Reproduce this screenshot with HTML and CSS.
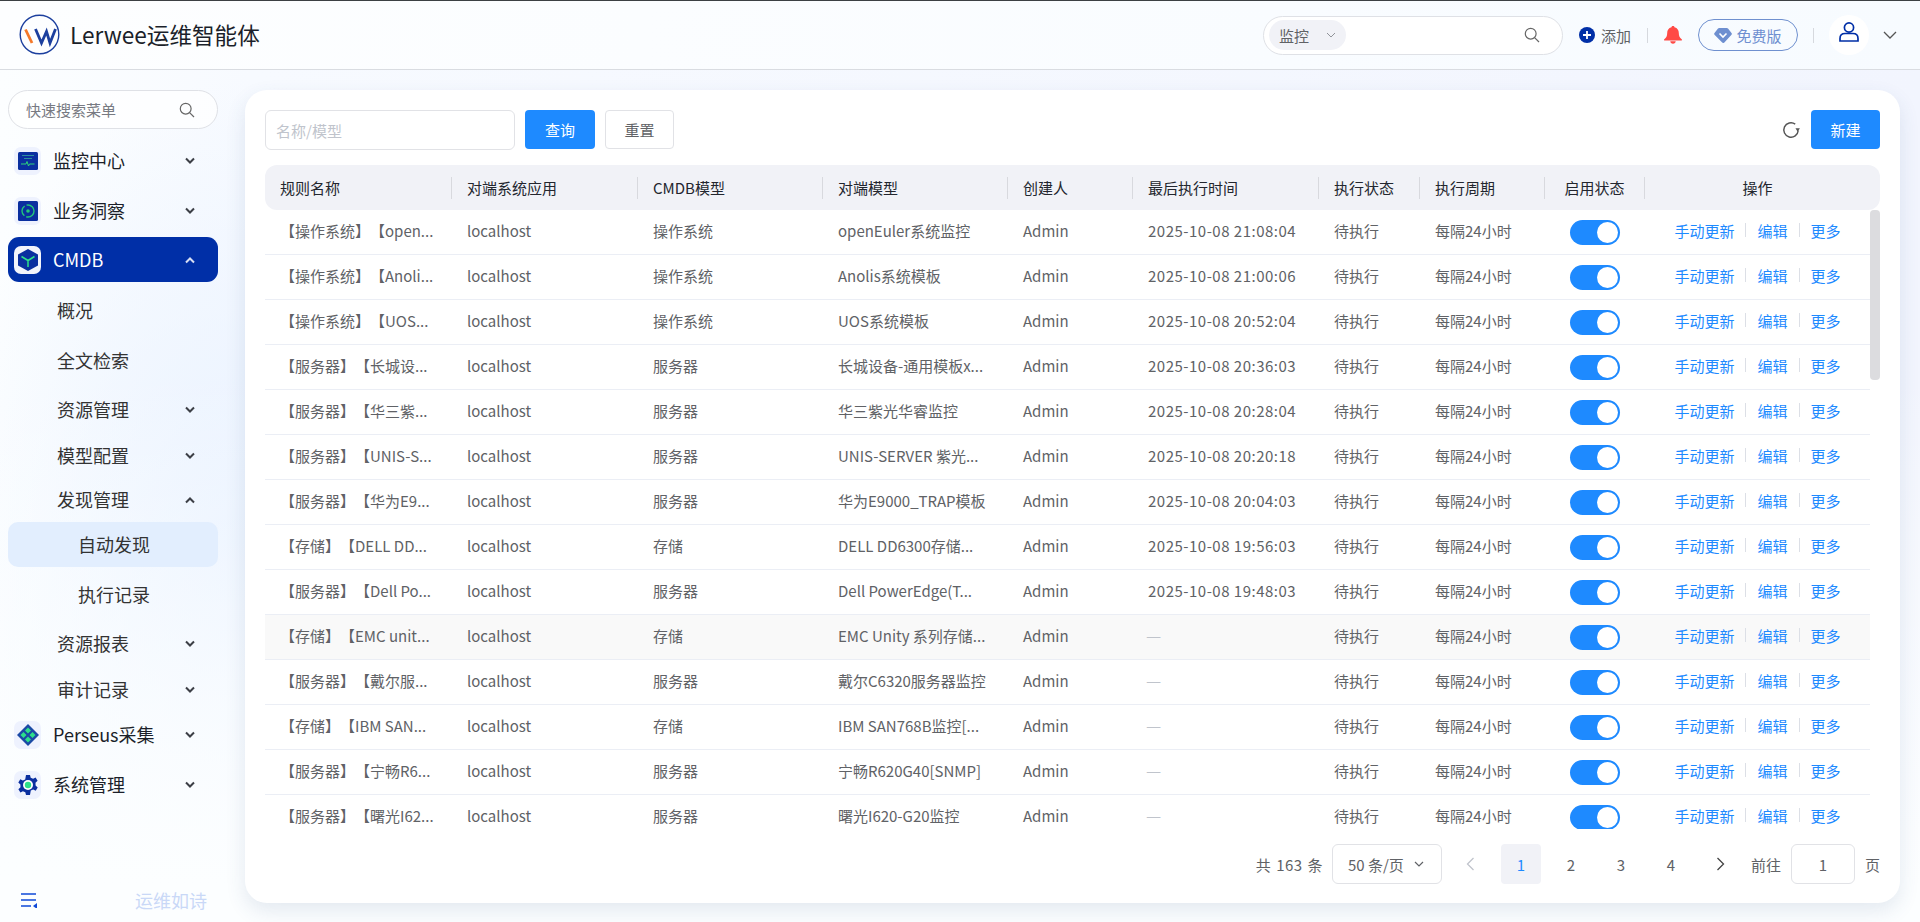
FILE: index.html
```html
<!DOCTYPE html>
<html lang="zh-CN">
<head>
<meta charset="utf-8">
<title>Lerwee运维智能体</title>
<link rel="stylesheet" href="styles.css">
</head>
<body>
<div class="app">
  <header class="topbar">
    <svg class="logo" viewBox="0 0 42 42" width="42" height="42" fill="none">
      <circle cx="20.5" cy="20.500" r="19.300" stroke="#1c3f9e" stroke-width="1.400"/>
      <path d="M6.500 15.500 13 29" stroke="#f4792b" stroke-width="2.800"/>
      <path d="M16.500 15 22.500 29 27.500 17.500 31 29 36.500 15" stroke="#1c3f9e" stroke-width="2.800"/>
    </svg>
    <div class="brand">Lerwee运维智能体</div>
    <div class="topsearch">
      <div class="scope">监控
        <svg width="10" height="6" viewBox="0 0 10 6" fill="none"><path d="M1 1l4 4 4-4" stroke="#909399" stroke-width="1"/></svg>
      </div>
      <svg class="search-ico" width="16" height="16" viewBox="0 0 16 16" fill="none"><circle cx="6.700" cy="6.700" r="5.400" stroke="#666" stroke-width="1.200"/><path d="M10.600 10.600 15 15" stroke="#666" stroke-width="1.200"/></svg>
    </div>
    <svg class="addico" width="16" height="16" viewBox="0 0 16 16"><circle cx="8" cy="8" r="8" fill="#002fa7"/><path d="M8 4v8M4 8h8" stroke="#fff" stroke-width="1.800"/></svg>
    <span class="addtxt">添加</span>
    <span class="vline vline-a"></span>
    <svg class="bell" width="20" height="18" viewBox="0 0 20 18"><path d="M10 0c.9 0 1.400.5 1.500 1.200C14.500 2 15.800 4.200 15.800 7c0 3 .9 4.800 2.900 6.200.5.400.3 1.300-.4 1.300H1.700c-.7 0-.9-.9-.4-1.300C3.300 11.800 4.200 10 4.200 7c0-2.800 1.300-5 4.300-5.800C8.600.5 9.100 0 10 0z" fill="#ff4a46"/><path d="M7.300 15.300h5.400c0 1.500-1.200 2.500-2.700 2.500s-2.700-1-2.700-2.500z" fill="#ff4a46"/></svg>
    <div class="plan">
      <svg width="18" height="15" viewBox="0 0 18 15"><path d="M5.200 0h7.600c.5 0 .9.2 1.200.6l3.500 4.300c.5.600.5 1.300 0 1.900l-7.100 7.700c-.7.700-1.500.7-2.200 0L.5 6.800c-.5-.6-.5-1.300 0-1.900L4 .6C4.300.2 4.700 0 5.200 0z" fill="#6e8fd0"/><path d="M5.500 5.500 9 9l3.500-3.500" fill="none" stroke="#fff" stroke-width="1.600"/></svg>
      <span>免费版</span>
    </div>
    <span class="vline vline-b"></span>
    <div class="avatar">
      <svg width="20" height="20" viewBox="0 0 20 20" fill="none"><circle cx="10" cy="5.500" r="4.600" stroke="#002fa7" stroke-width="1.700"/><path d="M1 19v-2.500c0-3 2-5 5-5h8c3 0 5 2 5 5V19z" stroke="#002fa7" stroke-width="1.700"/></svg>
    </div>
    <svg class="userchev" width="14" height="8" viewBox="0 0 14 8" fill="none"><path d="M1 1l6 6 6-6" stroke="#555" stroke-width="1.300"/></svg>
  </header>

  <div class="main">
    <aside class="sidebar">
      <div class="menusearch">
        <span>快速搜索菜单</span>
        <svg width="16" height="16" viewBox="0 0 16 16" fill="none"><circle cx="6.700" cy="6.700" r="5.400" stroke="#666" stroke-width="1.200"/><path d="M10.600 10.600 15 15" stroke="#666" stroke-width="1.200"/></svg>
      </div>
      <nav class="menu">
        <div class="item top m-9">
          <span class="tile"><svg width="20" height="18" viewBox="0 0 20 18"><rect width="20" height="18" rx="1.500" fill="#0a2f9f"/><path d="M4 3.500h12" stroke="#2d8f9d" stroke-width="1"/><path d="M6 6.500h8" stroke="#2d8f9d" stroke-width="1"/><path d="M3 12h5l1-2.500 1.500 4.500 1-2h5" fill="none" stroke="#2ed47a" stroke-width="1"/></svg></span>
          <span class="label">监控中心</span><svg class="chev" viewBox="0 0 12 8" width="12" height="8" fill="none"><path d="M2 1.500 6 5.500l4-4" stroke="#3c3f46" stroke-width="2"/></svg>
        </div>
        <div class="item top m-5">
          <span class="tile"><svg width="20" height="20" viewBox="0 0 20 20"><rect width="20" height="20" rx="1.500" fill="#0a2f9f"/><circle cx="10" cy="10" r="6" fill="none" stroke="#22c77a" stroke-width="1.400" stroke-dasharray="11 2"/><circle cx="10" cy="10" r="1.800" fill="#22c77a"/></svg></span>
          <span class="label">业务洞察</span><svg class="chev" viewBox="0 0 12 8" width="12" height="8" fill="none"><path d="M2 1.500 6 5.500l4-4" stroke="#3c3f46" stroke-width="2"/></svg>
        </div>
        <div class="item top active m-4">
          <span class="tile tile-white"><svg width="22" height="24" viewBox="0 0 22 24"><path d="M11 1l10 5.500v11L11 23 1 17.500v-11z" fill="#0a2f9f"/><path d="M4.500 8.500 11 12.500l6.500-4M11 12.500V19" fill="none" stroke="#2de08a" stroke-width="1.500"/></svg></span>
          <span class="label">CMDB</span><svg class="chev" viewBox="0 0 12 8" width="12" height="8" fill="none"><path d="M2 6.500 6 2.500l4 4" stroke="#d7def2" stroke-width="2"/></svg>
        </div>
        <div class="item sub m-6"><span class="label">概况</span></div>
        <div class="item sub m-5"><span class="label">全文检索</span></div>
        <div class="item sub m-4"><span class="label">资源管理</span><svg class="chev" viewBox="0 0 12 8" width="12" height="8" fill="none"><path d="M2 1.500 6 5.500l4-4" stroke="#3c3f46" stroke-width="2"/></svg></div>
        <div class="item sub m-1"><span class="label">模型配置</span><svg class="chev" viewBox="0 0 12 8" width="12" height="8" fill="none"><path d="M2 1.500 6 5.500l4-4" stroke="#3c3f46" stroke-width="2"/></svg></div>
        <div class="item sub short"><span class="label">发现管理</span><svg class="chev" viewBox="0 0 12 8" width="12" height="8" fill="none"><path d="M2 6.500 6 2.500l4 4" stroke="#3c3f46" stroke-width="2"/></svg></div>
        <div class="item leaf current"><span class="label">自动发现</span></div>
        <div class="item leaf m-5"><span class="label">执行记录</span></div>
        <div class="item sub m-4"><span class="label">资源报表</span><svg class="chev" viewBox="0 0 12 8" width="12" height="8" fill="none"><path d="M2 1.500 6 5.500l4-4" stroke="#3c3f46" stroke-width="2"/></svg></div>
        <div class="item sub m-1"><span class="label">审计记录</span><svg class="chev" viewBox="0 0 12 8" width="12" height="8" fill="none"><path d="M2 1.500 6 5.500l4-4" stroke="#3c3f46" stroke-width="2"/></svg></div>
        <div class="item top">
          <span class="tile"><svg width="22" height="22" viewBox="0 0 22 22"><path d="M11 0l11 11-11 11L0 11z" fill="#1b4aa5"/><path d="M11 3.500l3 3-3 3-3-3zM3.500 11l3-3 3 3-3 3zM18.500 11l-3-3-3 3 3 3zM11 18.500l3-3-3-3-3 3z" fill="#2de08a"/></svg></span>
          <span class="label">Perseus采集</span><svg class="chev" viewBox="0 0 12 8" width="12" height="8" fill="none"><path d="M2 1.500 6 5.500l4-4" stroke="#3c3f46" stroke-width="2"/></svg>
        </div>
        <div class="item top m-5">
          <span class="tile"><svg width="20" height="20" viewBox="0 0 20 20"><path d="M8 0h4l.7 2.800 2.400 1L17.600 2.400l2 3.400-2.100 2 .1 2.600 2.100 2-2 3.400-2.500-1.400-2.400 1L12 20H8l-.7-2.800-2.400-1-2.500 1.400-2-3.400 2.100-2-.1-2.600-2.100-2 2-3.400 2.500 1.400 2.400-1z" fill="#0a2f9f"/><circle cx="10" cy="10" r="5" fill="#fff"/><circle cx="10" cy="10" r="3.200" fill="#2de08a"/></svg></span>
          <span class="label">系统管理</span><svg class="chev" viewBox="0 0 12 8" width="12" height="8" fill="none"><path d="M2 1.500 6 5.500l4-4" stroke="#3c3f46" stroke-width="2"/></svg>
        </div>
      </nav>
      <div class="sidefoot">
        <svg width="18" height="15" viewBox="0 0 18 15" fill="none"><path d="M1 1h15M1 7h15M1 13h10" stroke="#0f49d8" stroke-width="1.500"/><path d="M13 13l4-3v6z" fill="#0f49d8"/></svg>
        <span class="motto">运维如诗</span>
      </div>
    </aside>

    <section class="content">
      <div class="card">
        <div class="toolbar">
          <div class="field"><span class="placeholder">名称/模型</span></div>
          <button class="btn primary">查询</button>
          <button class="btn plain">重置</button>
          <svg class="refresh" width="20" height="20" viewBox="0 0 18 18" fill="none"><path d="M15.500 9.500A6.500 6.500 0 1 1 12.800 3.700" stroke="#555" stroke-width="1.300"/><path d="M17 7.500h-4l2 3z" fill="#555"/></svg>
          <button class="btn primary new">新建</button>
        </div>

        <div class="thead">
          <div class="th">规则名称</div><div class="th">对端系统应用</div><div class="th">CMDB模型</div><div class="th">对端模型</div><div class="th">创建人</div><div class="th">最后执行时间</div><div class="th">执行状态</div><div class="th">执行周期</div><div class="th center">启用状态</div><div class="th center last">操作</div>
        </div>

        <div class="tbody">
          <div class="rows">
            <div class="row"><div class="td">【操作系统】【open...</div><div class="td">localhost</div><div class="td">操作系统</div><div class="td">openEuler系统监控</div><div class="td">Admin</div><div class="td time">2025-10-08 21:08:04</div><div class="td">待执行</div><div class="td">每隔24小时</div><div class="td center"><span class="switch"></span></div><div class="td acts"><a>手动更新</a><i></i><a>编辑</a><i></i><a>更多</a></div></div>
            <div class="row"><div class="td">【操作系统】【Anoli...</div><div class="td">localhost</div><div class="td">操作系统</div><div class="td">Anolis系统模板</div><div class="td">Admin</div><div class="td time">2025-10-08 21:00:06</div><div class="td">待执行</div><div class="td">每隔24小时</div><div class="td center"><span class="switch"></span></div><div class="td acts"><a>手动更新</a><i></i><a>编辑</a><i></i><a>更多</a></div></div>
            <div class="row"><div class="td">【操作系统】【UOS...</div><div class="td">localhost</div><div class="td">操作系统</div><div class="td">UOS系统模板</div><div class="td">Admin</div><div class="td time">2025-10-08 20:52:04</div><div class="td">待执行</div><div class="td">每隔24小时</div><div class="td center"><span class="switch"></span></div><div class="td acts"><a>手动更新</a><i></i><a>编辑</a><i></i><a>更多</a></div></div>
            <div class="row"><div class="td">【服务器】【长城设...</div><div class="td">localhost</div><div class="td">服务器</div><div class="td">长城设备-通用模板x...</div><div class="td">Admin</div><div class="td time">2025-10-08 20:36:03</div><div class="td">待执行</div><div class="td">每隔24小时</div><div class="td center"><span class="switch"></span></div><div class="td acts"><a>手动更新</a><i></i><a>编辑</a><i></i><a>更多</a></div></div>
            <div class="row"><div class="td">【服务器】【华三紫...</div><div class="td">localhost</div><div class="td">服务器</div><div class="td">华三紫光华睿监控</div><div class="td">Admin</div><div class="td time">2025-10-08 20:28:04</div><div class="td">待执行</div><div class="td">每隔24小时</div><div class="td center"><span class="switch"></span></div><div class="td acts"><a>手动更新</a><i></i><a>编辑</a><i></i><a>更多</a></div></div>
            <div class="row"><div class="td">【服务器】【UNIS-S...</div><div class="td">localhost</div><div class="td">服务器</div><div class="td">UNIS-SERVER 紫光...</div><div class="td">Admin</div><div class="td time">2025-10-08 20:20:18</div><div class="td">待执行</div><div class="td">每隔24小时</div><div class="td center"><span class="switch"></span></div><div class="td acts"><a>手动更新</a><i></i><a>编辑</a><i></i><a>更多</a></div></div>
            <div class="row"><div class="td">【服务器】【华为E9...</div><div class="td">localhost</div><div class="td">服务器</div><div class="td">华为E9000_TRAP模板</div><div class="td">Admin</div><div class="td time">2025-10-08 20:04:03</div><div class="td">待执行</div><div class="td">每隔24小时</div><div class="td center"><span class="switch"></span></div><div class="td acts"><a>手动更新</a><i></i><a>编辑</a><i></i><a>更多</a></div></div>
            <div class="row"><div class="td">【存储】【DELL DD...</div><div class="td">localhost</div><div class="td">存储</div><div class="td">DELL DD6300存储...</div><div class="td">Admin</div><div class="td time">2025-10-08 19:56:03</div><div class="td">待执行</div><div class="td">每隔24小时</div><div class="td center"><span class="switch"></span></div><div class="td acts"><a>手动更新</a><i></i><a>编辑</a><i></i><a>更多</a></div></div>
            <div class="row"><div class="td">【服务器】【Dell Po...</div><div class="td">localhost</div><div class="td">服务器</div><div class="td">Dell PowerEdge(T...</div><div class="td">Admin</div><div class="td time">2025-10-08 19:48:03</div><div class="td">待执行</div><div class="td">每隔24小时</div><div class="td center"><span class="switch"></span></div><div class="td acts"><a>手动更新</a><i></i><a>编辑</a><i></i><a>更多</a></div></div>
            <div class="row hover"><div class="td">【存储】【EMC unit...</div><div class="td">localhost</div><div class="td">存储</div><div class="td">EMC Unity 系列存储...</div><div class="td">Admin</div><div class="td none">—</div><div class="td">待执行</div><div class="td">每隔24小时</div><div class="td center"><span class="switch"></span></div><div class="td acts"><a>手动更新</a><i></i><a>编辑</a><i></i><a>更多</a></div></div>
            <div class="row"><div class="td">【服务器】【戴尔服...</div><div class="td">localhost</div><div class="td">服务器</div><div class="td">戴尔C6320服务器监控</div><div class="td">Admin</div><div class="td none">—</div><div class="td">待执行</div><div class="td">每隔24小时</div><div class="td center"><span class="switch"></span></div><div class="td acts"><a>手动更新</a><i></i><a>编辑</a><i></i><a>更多</a></div></div>
            <div class="row"><div class="td">【存储】【IBM SAN...</div><div class="td">localhost</div><div class="td">存储</div><div class="td">IBM SAN768B监控[...</div><div class="td">Admin</div><div class="td none">—</div><div class="td">待执行</div><div class="td">每隔24小时</div><div class="td center"><span class="switch"></span></div><div class="td acts"><a>手动更新</a><i></i><a>编辑</a><i></i><a>更多</a></div></div>
            <div class="row"><div class="td">【服务器】【宁畅R6...</div><div class="td">localhost</div><div class="td">服务器</div><div class="td">宁畅R620G40[SNMP]</div><div class="td">Admin</div><div class="td none">—</div><div class="td">待执行</div><div class="td">每隔24小时</div><div class="td center"><span class="switch"></span></div><div class="td acts"><a>手动更新</a><i></i><a>编辑</a><i></i><a>更多</a></div></div>
            <div class="row"><div class="td">【服务器】【曙光I62...</div><div class="td">localhost</div><div class="td">服务器</div><div class="td">曙光I620-G20监控</div><div class="td">Admin</div><div class="td none">—</div><div class="td">待执行</div><div class="td">每隔24小时</div><div class="td center"><span class="switch"></span></div><div class="td acts"><a>手动更新</a><i></i><a>编辑</a><i></i><a>更多</a></div></div>
          </div>
          <div class="track"><div class="thumb"></div></div>
        </div>

        <div class="pager">
          <span class="ptext total">共 163 条</span>
          <div class="psize">50 条/页<svg width="10" height="6" viewBox="0 0 10 6" fill="none"><path d="M1 1l4 4 4-4" stroke="#606266" stroke-width="1.200"/></svg></div>
          <span class="pbtn"><svg width="9" height="14" viewBox="0 0 9 14" fill="none"><path d="M7.500 1 1.500 7l6 6" stroke="#c0c4cc" stroke-width="1.300"/></svg></span>
          <span class="pbtn on">1</span><span class="pbtn">2</span><span class="pbtn">3</span><span class="pbtn">4</span>
          <span class="pbtn"><svg width="9" height="14" viewBox="0 0 9 14" fill="none"><path d="M1.500 1l6 6-6 6" stroke="#444" stroke-width="1.300"/></svg></span>
          <span class="ptext">前往</span>
          <div class="pinput">1</div>
          <span class="ptext">页</span>
        </div>
      </div>
    </section>
  </div>
</div>
</body>
</html>
```

FILE: styles.css
```css
* { box-sizing: border-box; }
html, body { margin: 0; padding: 0; height: 100%; overflow: hidden; }
body {
  font-family: "Noto Sans CJK SC", "Noto Sans", sans-serif;
  font-size: 15px;
  color: #606266;
  text-spacing-trim: space-all;
  background:
    linear-gradient(180deg, rgba(252,254,255,0) 40%, #fcfeff 96%),
    radial-gradient(ellipse 300px 460px at 240px 540px, #e9f2ff 0%, rgba(233,242,255,0) 100%),
    linear-gradient(90deg, #fcfeff 0%, #f7faff 13%, #f2f5fe 100%);
}
.app { height: 922px; display: flex; flex-direction: column; }

.topbar {
  height: 70px;
  flex: none;
  display: flex;
  align-items: center;
  border-top: 1px solid #3c4043;
  border-bottom: 1px solid #d9dce1;
  background: linear-gradient(90deg, #fdfeff 0%, #f7fbff 100%);
  padding-left: 19px;
}
.logo { flex: none; margin-top: -1px; }
.brand { font-size: 22.600px; color: #1b1f2a; margin-left: 9px; white-space: nowrap; margin-right: auto; padding-bottom: 2px; }
.topsearch {
  width: 300px; height: 39px; border: 1px solid #dfe1e6; border-radius: 20px; background: #fff;
  display: flex; align-items: center; padding-left: 5px; padding-right: 22px; justify-content: space-between;
}
.scope {
  width: 77px; height: 30px; border-radius: 15px; background: #f1f2f7; color: #606266;
  display: flex; align-items: center; justify-content: space-between; padding: 0 10px;
}
.addico { margin-left: 16px; flex: none; }
.addtxt { margin-left: 6px; color: #606266; white-space: nowrap; }
.vline { width: 1px; height: 15px; background: #d6d9de; flex: none; }
.vline-a { margin-left: 16px; }
.bell { margin-left: 15px; flex: none; }
.plan {
  margin-left: 15px; width: 100px; height: 32px; border: 1px solid #6f90cf; border-radius: 16px;
  display: flex; align-items: center; justify-content: center; gap: 4px; color: #6e8fd0;
}
.vline-b { margin-left: 15px; }
.avatar {
  margin-left: 15px; width: 40px; height: 40px; border-radius: 50%; background: #fff;
  display: flex; align-items: center; justify-content: center;
}
.avatar svg { margin-bottom: 6px; }
.userchev { margin-left: 14px; margin-right: 23px; flex: none; }

.main { flex: 1; display: flex; min-height: 0; }
.sidebar { width: 245px; flex: none; padding: 20px 0 0 8px; display: flex; flex-direction: column; }
.menusearch {
  width: 210px; height: 39px; border: 1px solid #dfe1e6; border-radius: 20px; flex: none; background: rgba(255,255,255,.7);
  display: flex; align-items: center; justify-content: space-between; padding: 0 22px 0 17px; color: #777a82;
}
.menu { width: 210px; }
.item { display: flex; align-items: center; height: 45px; color: #333; font-size: 18px; white-space: nowrap; }
.label { padding-bottom: 2px; }
.item .chev { margin-left: auto; margin-right: 22px; flex: none; }
.top { padding-left: 6px; color: #1b1f2a; }
.top .label { margin-left: 12px; }
.active { background: #002fa7; border-radius: 11px; color: #fff; }
.sub { padding-left: 49px; }
.short { height: 44px; }
.leaf { padding-left: 70px; }
.current { background: #e2eefe; border-radius: 10px; }
.m-1 { margin-top: 1px; }
.m-4 { margin-top: 4px; }
.m-5 { margin-top: 5px; }
.m-6 { margin-top: 6px; }
.m-9 { margin-top: 9px; }
.tile {
  width: 27px; height: 28px; border-radius: 7px; background: #eef2fe; flex: none;
  display: flex; align-items: center; justify-content: center;
}
.tile-white { background: #f2f4fb; }
.sidefoot { margin-top: auto; height: 44px; display: flex; align-items: center; padding-left: 12px; flex: none; }
.motto { margin-left: 97px; font-size: 18px; color: #c9d8f7; }

.content { flex: 1; min-width: 0; padding: 20px 20px 19px 0; }
.card {
  height: 100%; background: #fff; border-radius: 22px; padding: 20px 20px 0;
  box-shadow: 0 8px 20px rgba(50, 80, 130, .12);
}
.toolbar { display: flex; align-items: flex-start; height: 40px; }
.field {
  width: 250px; height: 40px; border: 1px solid #e1e2e6; border-radius: 6px; padding-left: 10px;
  display: flex; align-items: center;
}
.placeholder { color: #c0c4cc; }
.btn {
  font: inherit; height: 39px; width: 70px; border-radius: 4px; border: 1px solid transparent; padding: 0; flex: none;
}
.primary { background: #1e8aff; color: #fff; margin-left: 10px; }
.plain { background: #fff; border-color: #e1e2e6; color: #606266; margin-left: 10px; width: 69px; }
.refresh { margin-left: auto; margin-top: 10px; flex: none; }
.new { margin-left: 10px; width: 69px; }

.thead, .row {
  display: grid;
  grid-template-columns: 187px 186px 185px 185px 125px 186px 101px 125px 100px 225px;
}
.thead { margin-top: 15px; height: 45px; background: #f1f2f7; border-radius: 12px; align-items: center; padding-right: 10px; color: #23262e; }
.th { height: 22px; line-height: 22px; padding-left: 15px; border-right: 1px solid #d8d9de; white-space: nowrap; }
.th.center { text-align: center; padding-left: 0; }
.th.last { border-right: 0; }

.tbody { height: 619px; display: flex; }
.rows { flex: 1; overflow: hidden; min-width: 0; }
.row { height: 45px; border-bottom: 1px solid #ebeef5; align-items: center; }
.hover { background: #f9f9f9; }
.td { padding: 0 0 4px 15px; white-space: nowrap; }
.td.center { padding: 0; display: flex; justify-content: center; }
.time { letter-spacing: .5px; }
.none { color: #c0c4cc; font-size: 17px; line-height: 22px; padding-left: 13px; }
.switch {
  width: 50px; height: 25px; border-radius: 13px; background: #1e8aff; display: flex; align-items: center; justify-content: flex-end; padding-right: 2px;
}
.switch::after { content: ""; width: 21px; height: 21px; border-radius: 50%; background: #fff; }
.acts { padding-left: 0; display: flex; justify-content: center; align-items: center; }
.acts a { color: #1e8aff; }
.acts i { width: 1px; height: 14px; background: #dcdfe6; margin: 0 11px; }
.track { width: 10px; flex: none; }
.thumb { height: 170px; background: #dcdcdf; border-radius: 4px; }

.pager { margin-top: 15px; height: 40px; display: flex; align-items: center; justify-content: flex-end; gap: 10px; }
.ptext { white-space: nowrap; }
.total { word-spacing: 1px; letter-spacing: .5px; }
.psize {
  width: 110px; height: 40px; border: 1px solid #e1e2e6; border-radius: 6px; display: flex; align-items: center; justify-content: space-between; padding: 0 17px 0 15px;
  margin-left: -1px; margin-right: -1px; white-space: nowrap;
}
.pbtn { width: 40px; height: 40px; display: flex; align-items: center; justify-content: center; border-radius: 4px; flex: none; }
.pbtn.on { background: #f1f2f7; color: #1e8aff; }
.pinput { width: 64px; height: 40px; border: 1px solid #e1e2e6; border-radius: 6px; display: flex; align-items: center; justify-content: center; }
```
